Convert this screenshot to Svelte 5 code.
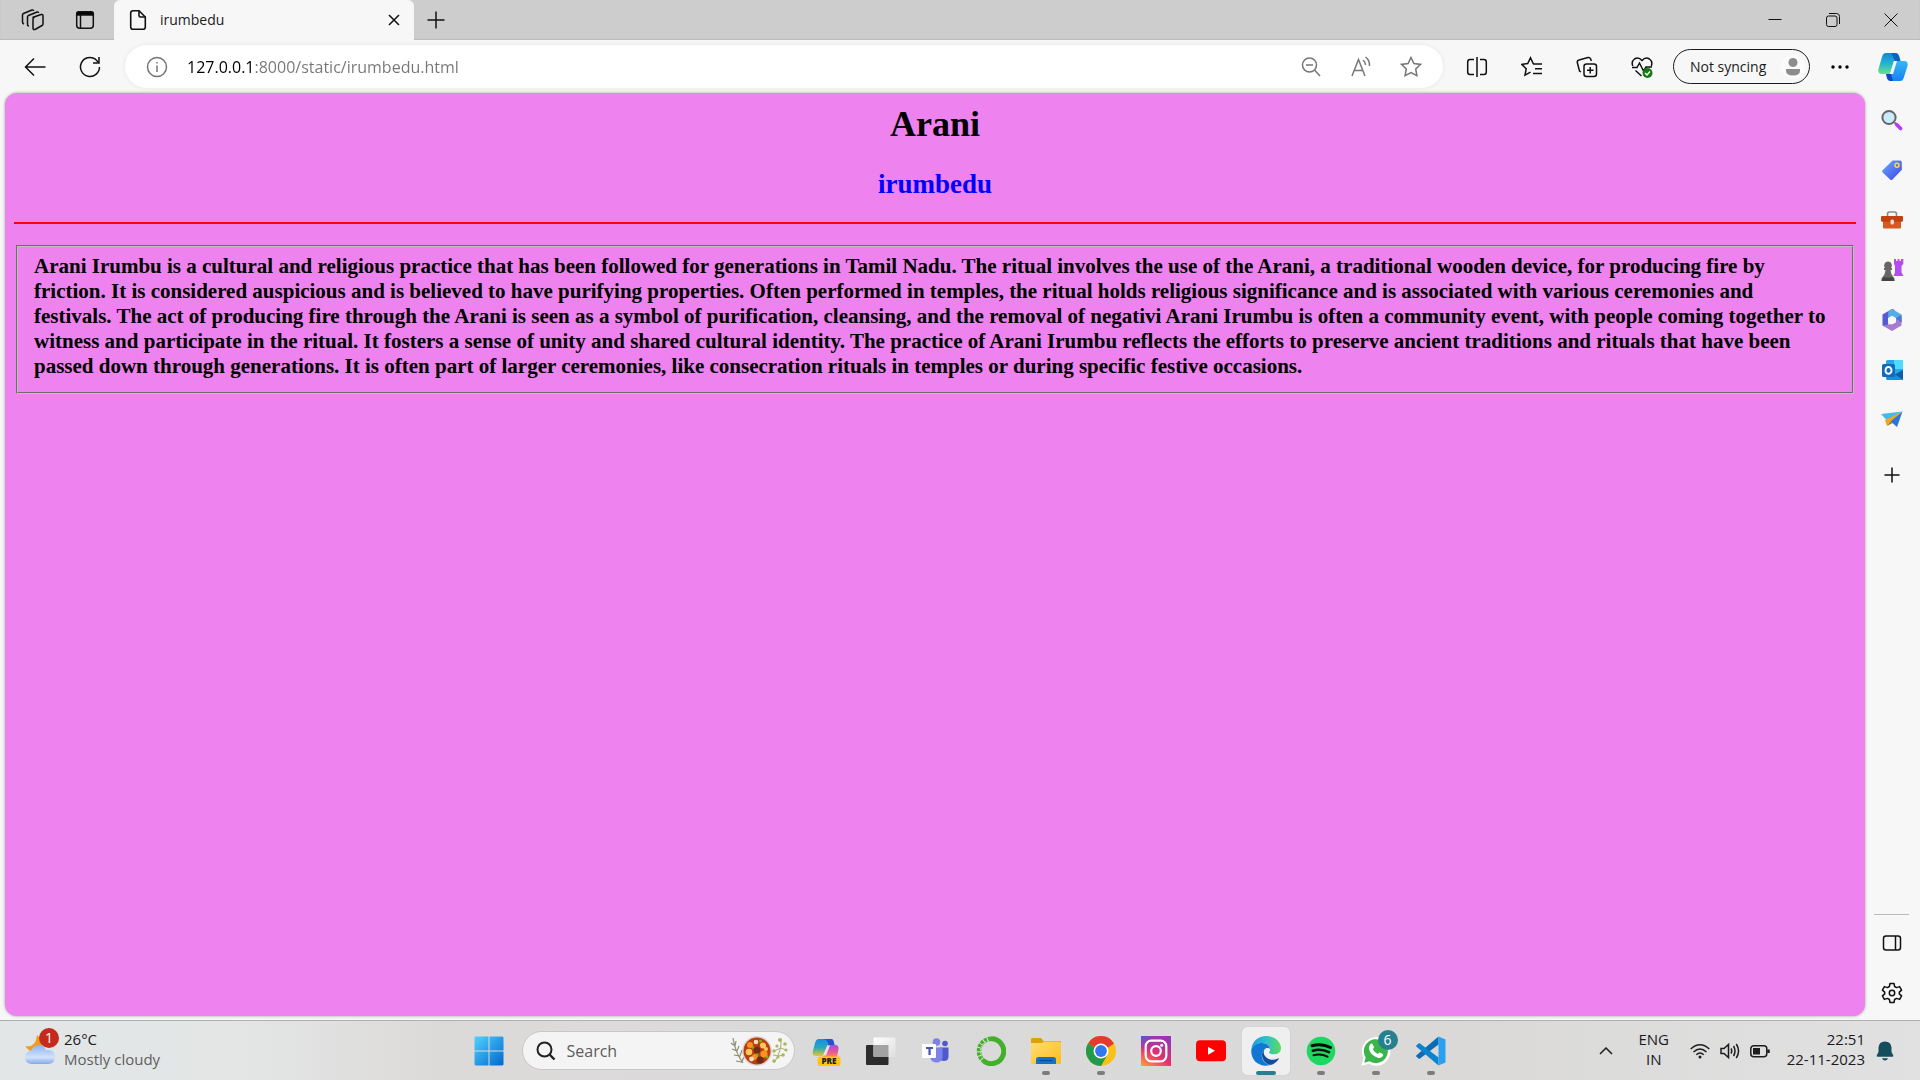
<script>
  const pinned = [
    { id: 'copilot', label: 'Copilot preview', state: '' },
    { id: 'taskview', label: 'Task view', state: '' },
    { id: 'teams', label: 'Microsoft Teams', state: '' },
    { id: 'anaconda', label: 'Anaconda Navigator', state: '' },
    { id: 'folder', label: 'File Explorer', state: 'open' },
    { id: 'chrome', label: 'Google Chrome', state: 'open' },
    { id: 'instagram', label: 'Instagram', state: '' },
    { id: 'youtube', label: 'YouTube', state: '' },
    { id: 'edge', label: 'Microsoft Edge', state: 'active' },
    { id: 'spotify', label: 'Spotify', state: 'open' },
    { id: 'whatsapp', label: 'WhatsApp', state: 'open', badge: '6' },
    { id: 'vscode', label: 'Visual Studio Code', state: 'open' }
  ];
  const tools = ['search', 'shopping', 'toolbox', 'games', 'office', 'outlook', 'drop'];
  let url = $state('127.0.0.1:8000/static/irumbedu.html');
  let query = $state('');
</script>

{#snippet toolIcon(id)}
  <svg width="24" height="24" viewBox="0 0 24 24" aria-hidden="true">
    {#if id === 'search'}
      <path d="M14.5 14.5l3 3" stroke="#777" stroke-width="2" />
      <path d="M16.6 16.600l4 4" stroke="#b93bf5" stroke-width="3.600" stroke-linecap="round" />
      <circle cx="9" cy="9.500" r="6.600" fill="#c9ebfb" stroke="#666" stroke-width="2" />
    {:else if id === 'shopping'}
      <path d="M12.500 2.500h7.500q1.800 0 1.800 1.800v7.500L12.500 21.600q-1.200 1-2.400 0L2.700 14.500q-1-1.200 0-2.300z" fill="url(#gTag)" />
      <circle cx="17" cy="7.300" r="2" fill="#5a6de8" stroke="#ffdc3c" stroke-width="1.500" />
    {:else if id === 'toolbox'}
      <path d="M7.500 8V6q0-2 2-2h5q2 0 2 2v2" fill="none" stroke="#8a8a8a" stroke-width="1.600" />
      <path d="M3 13h18v6.500q0 1-1 1H4q-1 0-1-1z" fill="#d9581f" />
      <path d="M2 8h20q1 0 1 1v3.200q0 1.500-1.500 1.500h-19Q1 13.700 1 12.200V9q0-1 1-1z" fill="#c2410e" />
      <rect x="10.500" y="11.500" width="3.500" height="5" rx="1.500" fill="#e4e0dd" />
    {:else if id === 'games'}
      <path d="M14 1h2v2h1.500V1h2v2H21V1h2.300v5L21.500 8v6.500l2 3.500H13.500l1.500-3.500V8L14 6z" fill="#b54bf5" />
      <path d="M8 3.500a4 4 0 013 6.500h1v2h-1.500q.3 4 2.500 6.500l1.500 2v2.500H1.500V20.500L3 18.500q2.200-2.500 2.500-6.500H4v-2h1a4 4 0 013-6.500z" fill="#666" />
      <path d="M3 19.500h10l1.500 3.500h-13z" fill="#444" />
    {:else if id === 'office'}
      <path d="M12 1L2.500 6.500v11L8.200 20V10.200L14.500 6V1.800z" fill="#555bd0" />
      <path d="M12 1l9.500 5.500v8l-5.700-4.300L12 8 8.200 10.200V3.200z" fill="#57ace8" />
      <path d="M2.500 17.500L12 23l9.500-5.500V8.500l-5.700 1.700v4L12 16z" fill="#a77ad0" />
      <path d="M15.800 10.200L21.500 7v7.500z" fill="#4379d8" />
      <path d="M12 7.700l4 2.300v4.200L12 16.500l-4-2.300V10z" fill="#f7f7f7" />
    {:else if id === 'outlook'}
      <rect x="6" y="2" width="17" height="20" rx="1.500" fill="#28a8ea" />
      <path d="M14 2h9v9h-9z" fill="#50d9ff" /><path d="M7 12l8 4 8-4v9q0 1-1 1H7z" fill="#1490df" />
      <path d="M23 12l-8 4.500 8 5z" fill="#0a5ea8" />
      <rect x="2" y="6" width="13" height="13" rx="1.500" fill="#0f6cbd" />
      <ellipse cx="8.500" cy="12.400" rx="3" ry="3.400" fill="none" stroke="#fff" stroke-width="1.900" />
    {:else}
      <path d="M1 6l21.500-2.500L7 12.500z" fill="#43b9f0" />
      <path d="M22.500 3.500L10 13l7 6z" fill="#2877db" />
      <path d="M22.500 3.500L5 12l2 6 3.500-4.500z" fill="#f2a51d" />
      <path d="M7 18l3.500-4.500L12.500 15z" fill="#b56d09" />
    {/if}
  </svg>
{/snippet}

{#snippet appIcon(id)}
  <svg width="30" height="30" viewBox="0 0 30 30" aria-hidden="true">
    {#if id === 'copilot'}
      <path d="M8 3h12q2 0 2.500 2l1 4h-7l-4.500 11H5q-4 0-3.300-4L4 7q1-4 4-4z" fill="url(#gCop1)" />
      <path d="M12 3h8q2 0 2.500 2l1 4h-6q-1-6-5.500-6z" fill="#2352cf" />
      <path d="M17 9h7q4 0 3.500 4l-1.500 8H10q3 0 4-4z" fill="url(#gCop2)" />
      <path d="M16.500 9.500h2.500l-4 10h-3z" fill="#ecdff5" />
      <rect x="6.500" y="20.500" width="23" height="9.500" rx="2" fill="#ffc60b" />
      <text x="18" y="28.200" text-anchor="middle" class="pre">PRE</text>
    {:else if id === 'taskview'}
      <rect x="0" y="9" width="22.500" height="20" rx="1" fill="#2c2c2c" />
      <rect x="7.500" y="1.500" width="22" height="19.500" rx="1" fill="url(#gTask)" />
      <path d="M7.500 9h15v12h-14q-1 0-1-1z" fill="#a3a3a3" />
    {:else if id === 'teams'}
      <circle cx="15.500" cy="6" r="3.800" fill="#7b83eb" /><circle cx="24" cy="7.500" r="2.800" fill="#5059c9" />
      <path d="M19 11.500h8.500v9q0 4.500-5 4.500-3.500 0-3.500-4z" fill="#5059c9" />
      <path d="M9 11.500h12.500v10q-1 5-6 5t-6.500-5z" fill="#7b83eb" />
      <rect x="1" y="8" width="14" height="14" rx="1" fill="#fff" />
      <path d="M5 11h7v2H9.700v6H7.400v-6H5z" fill="#4b53bc" />
    {:else if id === 'anaconda'}
      <path d="M15 2.800A12.400 12.400 0 1 1 8 25.200" fill="none" stroke="#43b02a" stroke-width="5" />
      <path d="M8.500 25.500A12.400 12.400 0 0 1 15 2.800" fill="none" stroke="#43b02a" stroke-width="4.500" stroke-dasharray="3 1" />
      <path d="M6.500 23A12.500 12.500 0 0 1 14 3.800" fill="none" stroke="#dfe8dc" stroke-width="1" stroke-dasharray="1.500 1.500" />
    {:else if id === 'folder'}
      <path d="M0 3.500Q0 2 1.500 2H10l2.500 3H30v7H0z" fill="#dfa006" />
      <path d="M0 7h11l2-1.500H28.500q1.500 0 1.500 1.500v20q0 1-1 1H1q-1 0-1-1z" fill="url(#gFold)" />
      <path d="M5 28v-4.500Q5 21 7.500 21h15q2.500 0 2.500 2.500V28z" fill="#1273c9" />
      <path d="M8.500 24.500h13" stroke="#0a4c8c" stroke-width="1.200" />
    {:else if id === 'chrome'}
      <circle cx="15" cy="15" r="15" fill="#fbc116" />
      <path d="M15 15L2 7.500A15 15 0 0 1 28 7.500z" fill="#e33b2e" /><path d="M15 7.500h13l-6 4z" fill="#e33b2e" />
      <path d="M2 7.500A15 15 0 0 0 15 30l6.500-11.300L15 15z" fill="#229a4a" />
      <circle cx="15" cy="15" r="7.500" fill="#fff" /><circle cx="15" cy="15" r="5.900" fill="#3078ef" />
    {:else if id === 'instagram'}
      <rect width="30" height="30" fill="url(#gInsta)" /><rect width="30" height="30" fill="url(#gInstaGlow)" />
      <g fill="none" stroke="#fff" stroke-width="2.200"><rect x="4.700" y="4.700" width="20.600" height="20.600" rx="5.500" /><circle cx="15" cy="15" r="4.800" /></g>
      <circle cx="20.700" cy="9.300" r="1.500" fill="#fff" />
    {:else if id === 'youtube'}
      <rect x="0" y="4.300" width="30" height="21" rx="4" fill="#f00" /><path d="M12 10.800v8l7-4z" fill="#fff" />
    {:else if id === 'edge'}
      <path d="M.3 14C1 5.500 7 0 15.300 0 23.500 0 30 5.500 30 12c0 4-3 6.500-7 6.500-3 0-5-1-5-2s1-1.500 1-3.500c0-3-3.500-6-8-6-5.500 0-9.500 3-10.700 7z" fill="url(#gEdge1)" />
      <path d="M.3 14C1.500 9.500 6 7 11 7c4.500 0 8 3 8 6-2-2-6-1-7.500 3-2.500 6 2 12.500 8 13C9 32-.5 25 .3 14z" fill="#1177d4" />
      <path d="M11.500 16c-2 5 2 12.500 8 13 3.500-.8 6.300-3 8.200-6 .3-.6-.3-.9-.8-.6-2 1-4 1.500-6 1.300-4.500-.3-8-3.500-8.200-7.200q-.2-2.500 2-4-2.300.7-3.200 3.500z" fill="#104e9e" />
      <path d="M14 13.500q2-2 5-.5c0 2-1 2.500-1 3.500s2 2 5 2q3 0 5-1.500-1.500 3.500-6 4-5.500.5-7.500-3-1-2-.5-4.500z" fill="#eef3f6" />
    {:else if id === 'spotify'}
      <circle cx="15" cy="15" r="14.300" fill="#1ed760" />
      <g fill="none" stroke="#0a0a0a" stroke-linecap="round"><path d="M6 9.700Q16 7 24.500 11.500" stroke-width="3" /><path d="M6.800 14.700Q15 12.300 23 16.200" stroke-width="2.500" /><path d="M7.500 19.200Q15 17.300 21.500 20.700" stroke-width="2" /></g>
    {:else if id === 'whatsapp'}
      <path d="M.3 29.700l2.200-7.600A14.300 14.300 0 1 1 8 27.800z" fill="#fff" />
      <path d="M3.200 26.800l1.500-5.300A12 12 0 1 1 8.500 25.300z" fill="#3bb54a" />
      <path d="M9.500 8q1.200-1 2 0l1.500 3q0 1-1.200 2.200 1.700 3.300 5 4.800 1.300-1.800 2-1.600l3 1.500q.8.800 0 2.200-1.800 2.500-5 1.600Q9.500 19.500 8 13q-.3-3.200 1.500-5z" fill="#fff" />
    {:else}
      <path d="M22.500.5v8L4 22.500q-.8.500-1.500 0L.5 20.700q-.7-.8 0-1.500z" fill="#0a6cb4" />
      <path d="M22.500 29.500v-8L4 7.500q-.8-.5-1.500 0L.5 9.300q-.7.800 0 1.500z" fill="#0b83cd" />
      <path d="M22.500.5L29.500 3.500v23l-7 3z" fill="#2aa1f0" />
    {/if}
  </svg>
{/snippet}

<svg class="defs" width="0" height="0" aria-hidden="true">
  <defs>
    <linearGradient id="gTag" x1="0" y1="0" x2="1" y2="1"><stop stop-color="#65aefa" /><stop offset="1" stop-color="#4240e8" /></linearGradient>
    <linearGradient id="gCop1" x1="0" y1="0" x2="0" y2="1"><stop stop-color="#168de4" /><stop offset=".5" stop-color="#25a9bd" /><stop offset="1" stop-color="#e9c52c" /></linearGradient>
    <linearGradient id="gCop2" x1="0" y1="0" x2="0" y2="1"><stop stop-color="#a74be2" /><stop offset=".6" stop-color="#ed5794" /><stop offset="1" stop-color="#ff8c59" /></linearGradient>
    <linearGradient id="gTask" x1="0" y1="0" x2="1" y2="1"><stop stop-color="#fff" /><stop offset="1" stop-color="#dedede" /></linearGradient>
    <linearGradient id="gFold" x1="0" y1="0" x2="1" y2="1"><stop stop-color="#ffde73" /><stop offset="1" stop-color="#fbbc1b" /></linearGradient>
    <linearGradient id="gInsta" x1="0" y1="1" x2=".6" y2="0"><stop stop-color="#fda03c" /><stop offset=".5" stop-color="#e42f6c" /><stop offset="1" stop-color="#9a35b5" /></linearGradient>
    <radialGradient id="gInstaGlow" cx="0" cy="0" r=".6"><stop stop-color="#4a5ed6" /><stop offset="1" stop-color="#8a3ac0" stop-opacity="0" /></radialGradient>
    <linearGradient id="gEdge1"><stop stop-color="#1a9be0" /><stop offset=".5" stop-color="#2cbfd0" /><stop offset="1" stop-color="#5fdc55" /></linearGradient>
    <linearGradient id="gWin" x1="0" y1="0" x2="1" y2="1"><stop stop-color="#50d2fb" /><stop offset="1" stop-color="#0067cf" /></linearGradient>
    <linearGradient id="gSky1" x1="0" y1="0" x2="0" y2="1"><stop stop-color="#1486d8" /><stop offset=".5" stop-color="#22b5cf" /><stop offset="1" stop-color="#6ce08d" /></linearGradient>
    <linearGradient id="gSky2" x1="0" y1="0" x2="0" y2="1"><stop stop-color="#35b8f4" /><stop offset="1" stop-color="#1681f5" /></linearGradient>
    <linearGradient id="gCloud" x1="0" y1="0" x2="0" y2="1"><stop stop-color="#8db3f1" /><stop offset=".65" stop-color="#d2e2fb" /><stop offset="1" stop-color="#81a8e9" /></linearGradient>
  </defs>
</svg>

<div class="window">
  <header class="tabs">
    <button class="lead first" aria-label="Workspaces">
      <svg class="line" width="24" height="24" viewBox="0 0 24 24"><path d="M11.500 9.500L20 6.500q2-.5 2 1.500v8q0 1-1 1.500l-6.500 3.700q-2.500 1-2.500-1v-9q0-1 1-1.700z" /><path d="M8 18q-1.500 0-1.500-1.500V9q0-1 1-1.500L16 4q1.500-.5 1.500 1" /><path d="M3 16q-1.500-.5-1.500-2V7q0-1 1-1.500L11 2q1.500-.5 1.500 1" /></svg>
    </button>
    <button class="lead" aria-label="Tab actions">
      <svg class="line" width="20" height="20" viewBox="0 0 20 20"><rect x="1.700" y="1.700" width="16.600" height="16.600" rx="3" /><path d="M1.700 5V4q0-2.300 2.300-2.300h12q2.300 0 2.300 2.300v1z" fill="#000" /><path d="M5.500 5v13" /></svg>
    </button>
    <div class="tab">
      <svg class="line page-icon" width="18" height="22" viewBox="0 0 18 22"><path d="M4 1.700h6L16.300 8v10q0 2.300-2.300 2.300H4q-2.300 0-2.300-2.300V4Q1.700 1.700 4 1.700z" /><path d="M10 1.700V6.500q0 1.500 1.500 1.500h4.800" /></svg>
      <span>irumbedu</span>
      <button class="close-tab" aria-label="Close tab"><svg class="line" width="12" height="12" viewBox="0 0 12 12"><path d="M1 1l10 10M11 1L1 11" /></svg></button>
    </div>
    <button class="new-tab" aria-label="New tab"><svg class="line" width="18" height="18" viewBox="0 0 18 18"><path d="M9 .5v17M.5 9h17" /></svg></button>
    <div class="controls">
      <button aria-label="Minimize"><svg class="line thin" width="14" height="14" viewBox="0 0 14 14"><path d="M.5 6.500h13" /></svg></button>
      <button aria-label="Restore"><svg class="line thin" width="14" height="14" viewBox="0 0 14 14"><rect x=".5" y="3" width="10.500" height="10.500" rx="2" /><path d="M3 .5h7.500q3 0 3 3V11" /></svg></button>
      <button aria-label="Close"><svg class="line thin" width="14" height="14" viewBox="0 0 14 14"><path d="M.5.500l13 13M13.500.500l-13 13" /></svg></button>
    </div>
  </header>

  <nav class="toolbar">
    <button class="nav-btn" aria-label="Back"><svg class="line" width="22" height="20" viewBox="0 0 22 20"><path d="M21.500 10H1.500M10 1.500L1.500 10l8.500 8.500" /></svg></button>
    <button class="nav-btn" aria-label="Refresh"><svg class="line" width="22" height="22" viewBox="0 0 22 22"><path d="M20.500 11A9.500 9.500 0 1 1 16.500 3.200L19.500 6.500" /><path d="M20 1v6h-6" /></svg></button>
    <div class="address">
      <button class="info" aria-label="Site information"><svg class="line" width="22" height="22" viewBox="0 0 22 22"><circle cx="11" cy="11" r="9.500" /><path d="M11 9.500V16M11 6v1.500" /></svg></button>
      <input aria-label="Address" bind:value={url} />
      <button aria-label="Zoom out"><svg class="line" width="22" height="22" viewBox="0 0 22 22"><circle cx="9.500" cy="9" r="7" /><path d="M14.500 14l5.500 6M6 9h7" /></svg></button>
      <button aria-label="Read aloud"><svg class="line" width="22" height="22" viewBox="0 0 22 22"><path d="M2 20L8.500 3.500 15 20M4.200 14.500h8.600M13 4q2.500 2 2.500 5M15.500 1q4.500 3.500 4 9" /></svg></button>
      <button aria-label="Add to favorites"><svg class="line" width="22" height="22" viewBox="0 0 22 22"><path d="M11 1.500l2.900 6 6.600.9-4.800 4.600 1.200 6.600L11 16.500l-5.900 3.100L6.300 13 1.500 8.400l6.600-.9z" /></svg></button>
    </div>
    <button class="tool" aria-label="Split screen"><svg class="line" width="22" height="22" viewBox="0 0 22 22"><path d="M8 3.500H4Q1.700 3.500 1.700 6v10Q1.700 18.500 4 18.500h4M14 3.500h4q2.300 0 2.300 2.500v10q0 2.500-2.300 2.500h-4M11 1v20" /></svg></button>
    <button class="tool" aria-label="Favorites"><svg class="line" width="22" height="22" viewBox="0 0 22 22"><path d="M13 8l-.8-.5L9.500 1.800 6.700 7.500l-6 .9 4.500 4.300-1.200 6.500 5.500-3M12 8h9M14 12.700h7M12 17.500h9" /></svg></button>
    <button class="tool" aria-label="Collections"><svg class="line" width="22" height="22" viewBox="0 0 22 22"><rect x="8" y="8" width="12.500" height="12.500" rx="2.500" /><path d="M14.200 11v6.500M11 14.200h6.500M5 16l-1.500-1L1.300 6.500Q1 4.500 3 4l9-2.500q2-.3 2.700 1.500l.6 2" /></svg></button>
    <button class="tool" aria-label="Browser essentials"><svg class="line" width="22" height="22" viewBox="0 0 22 22"><path d="M1.800 10Q0 5.500 3.500 3q4-2.500 7.500 1.500Q14.500.5 18.500 3q3.500 2.500 1.800 7M1 11.500h5L8.500 7l4 8 2.500-4h6M4.500 14.500l6 5.500" /><circle cx="16.500" cy="17" r="5" fill="#107c10" stroke="none" /><path d="M14 17l2 2 3-3.500" stroke="#fff" /></svg></button>
    <button class="profile">Not syncing
      <svg width="24" height="24" viewBox="0 0 24 24"><circle cx="12" cy="12" r="12" fill="#fbfbfb" /><circle cx="12" cy="7.500" r="4.500" fill="#8c8c8c" /><path d="M5 14h14v1.500q0 5-7 5t-7-5z" fill="#8c8c8c" /></svg>
    </button>
    <button class="more" aria-label="Settings and more"><svg width="18" height="4" viewBox="0 0 18 4"><circle cx="2" cy="2" r="1.700" /><circle cx="9" cy="2" r="1.700" /><circle cx="16" cy="2" r="1.700" /></svg></button>
    <button class="assistant" aria-label="Copilot">
      <svg width="30" height="28" viewBox="0 0 30 28"><path d="M8 0h9q3 0 4 3l1.500 5h-6.500l-4 13H4Q-.5 21 .5 16L4 4q1-4 4-4z" fill="url(#gSky1)" /><path d="M13 0h4q3 0 4 3l1.500 5H17z" fill="#0b62c4" /><path d="M22 28h-9q-3 0-4-3l-.5-4 4 0L17 8h9q4.500 0 3.500 5L26 24q-1 4-4 4z" fill="url(#gSky2)" /><path d="M8 21h5l2 7h-2q-3 0-4-3z" fill="#1444ce" /><path d="M16 8h3l-4 13h-3z" fill="#f7f7f7" /></svg>
    </button>
  </nav>

  <div class="body">
    <main>
      <h1>Arani</h1>
      <h2>irumbedu</h2>
      <hr />
      <fieldset>
        <h3>Arani Irumbu is a cultural and religious practice that has been followed for generations in Tamil Nadu. The ritual involves the use of the Arani, a traditional wooden device, for producing fire by friction. It is considered auspicious and is believed to have purifying properties. Often performed in temples, the ritual holds religious significance and is associated with various ceremonies and festivals. The act of producing fire through the Arani is seen as a symbol of purification, cleansing, and the removal of negativi Arani Irumbu is often a community event, with people coming together to witness and participate in the ritual. It fosters a sense of unity and shared cultural identity. The practice of Arani Irumbu reflects the efforts to preserve ancient traditions and rituals that have been passed down through generations. It is often part of larger ceremonies, like consecration rituals in temples or during specific festive occasions.</h3>
      </fieldset>
    </main>
    <aside>
      {#each tools as id}
        <button aria-label={id}>{@render toolIcon(id)}</button>
      {/each}
      <button class="customize" aria-label="Customize"><svg class="line" width="16" height="16" viewBox="0 0 16 16"><path d="M8 .5v15M.5 8h15" /></svg></button>
      <div class="rule"></div>
      <button aria-label="Hide sidebar"><svg class="line" width="20" height="18" viewBox="0 0 20 18"><rect x="1.500" y="2" width="17" height="14" rx="2.500" /><path d="M13.500 2v14" /></svg></button>
      <button aria-label="Settings"><svg class="line" width="22" height="22" viewBox="0 0 22 22"><path d="M9 1.500h4l.6 3 2 1.100 3-1 2 3.500-2.300 2v1.800l2.300 2-2 3.500-3-1-2 1.100-.6 3H9l-.6-3-2-1.100-3 1-2-3.500 2.300-2v-1.800l-2.300-2 2-3.500 3 1 2-1.100z" stroke-linejoin="round" /><circle cx="11" cy="11" r="2.700" /></svg></button>
    </aside>
  </div>

  <footer>
    <button class="weather">
      <span class="weather-icon">
        <svg width="30" height="30" viewBox="0 0 30 30" aria-hidden="true"><path d="M12 1q7 5 4.500 12-4 6-12 3.500Q1 14 .5 12 11 14 12 1z" fill="#f39b1d" /><path d="M7 30q-7 0-7-6.500 0-6 6-6.500Q8 11 14 11q5 0 7 5 9-1 9 7 0 7-7 7z" fill="url(#gCloud)" /></svg>
        <span class="badge red">1</span>
      </span>
      <span class="weather-text"><span>26°C</span><span class="muted">Mostly cloudy</span></span>
    </button>
    <div class="center">
      <button class="app" aria-label="Start"><svg width="30" height="30" viewBox="0 0 30 30"><path d="M1.500.500h13v14h-14v-13zM15.500.500h13l1 1v13h-14zM.500 15.500h14v14h-13l-1-1zM15.500 15.500h14v13l-1 1h-13z" fill="url(#gWin)" /></svg></button>
      <label class="search">
        <svg width="20" height="20" viewBox="0 0 20 20" aria-hidden="true"><circle cx="8.500" cy="8.500" r="7" fill="none" stroke="#222" stroke-width="2" /><path d="M13.500 13.500l5 5" stroke="#222" stroke-width="2.400" /></svg>
        <input aria-label="Search" placeholder="Search" bind:value={query} />
        <svg width="58" height="32" viewBox="0 0 58 32" aria-hidden="true">
          <g fill="none" stroke="#8b8f78" stroke-width="1.200"><path d="M3 3q2 14 10 25M1 8l4 3 1-5M2 14l5 2 2-5M4 20l6 1 2-6M6 26l6 1 2-6" /></g>
          <g fill="none" stroke="#a5b06a" stroke-width="1"><path d="M51 4q1 12-7 24M44 16l7-3 5 2M43 20l6 1 4-1" /></g>
          <g fill="#a9b85f"><circle cx="50" cy="5" r="2" /><circle cx="47" cy="11" r="1.600" /><circle cx="55" cy="9" r="1.800" /><circle cx="44" cy="16" r="1.700" /><circle cx="56" cy="15" r="1.600" /><circle cx="53" cy="20" r="1.800" /><circle cx="44" cy="26" r="1.800" /><circle cx="48" cy="22" r="1.500" /></g>
          <circle cx="27" cy="16" r="15" fill="#d9d5d4" /><circle cx="27" cy="16" r="13.500" fill="#b83e0c" />
          <g fill="#ff9120"><circle cx="20" cy="10" r="3" /><circle cx="34" cy="19" r="3.600" /><circle cx="25" cy="22" r="3" /></g>
          <g fill="#ffc65a"><circle cx="33" cy="10.500" r="3" /><circle cx="19" cy="17" r="3.300" /><circle cx="36" cy="14" r="2" /></g>
          <g fill="#6c2c17"><circle cx="27" cy="15" r="3.300" /><circle cx="30" cy="25" r="3.600" /></g>
          <g fill="#f0dcc8"><circle cx="26" cy="7" r="2.300" /><circle cx="21.500" cy="24" r="2.400" /></g>
          <g fill="#79b520"><circle cx="30.500" cy="6" r="1.500" /><circle cx="27" cy="20" r="1.500" /><circle cx="37" cy="22" r="1.400" /><circle cx="23" cy="12.500" r="1.200" /></g>
        </svg>
      </label>
      {#each pinned as app}
        <button class="app {app.state}" aria-label={app.label}>
          {@render appIcon(app.id)}
          {#if app.badge}<span class="badge teal">{app.badge}</span>{/if}
        </button>
      {/each}
    </div>
    <div class="tray">
      <button class="chevron" aria-label="Show hidden icons"><svg class="line tray-icon" width="14" height="8" viewBox="0 0 14 8"><path d="M1 7l6-6 6 6" /></svg></button>
      <button class="lang"><span>ENG</span><span>IN</span></button>
      <button class="status" aria-label="Network, volume and battery">
        <svg class="line tray-icon" width="20" height="20" viewBox="0 0 20 20"><path d="M.7 8q9.300-8.500 18.600 0M3.500 11Q10 5 16.500 11M6.300 13.800q3.700-3.500 7.400 0" /><circle cx="10" cy="16" r="1.500" fill="#1d1d1d" stroke="none" /></svg>
        <svg class="line tray-icon" width="20" height="20" viewBox="0 0 20 20"><path d="M1 7.500h3L8.500 3.500v13L4 12.500H1zM11 7.500q1.500 2.500 0 5M13.500 5q3 5 0 10M16.300 3q4.500 7 0 14" /></svg>
        <svg class="line tray-icon" width="20" height="20" viewBox="0 0 20 20"><rect x=".8" y="4.700" width="16" height="11" rx="3" /><rect x="3" y="7" width="7" height="6.500" fill="#1d1d1d" stroke="none" /><path d="M18.500 8.500v3.500" stroke-width="2.500" /></svg>
      </button>
      <button class="clock"><span>22:51</span><span>22-11-2023</span></button>
      <button class="bell" aria-label="Notifications"><svg width="18" height="20" viewBox="0 0 18 20"><path d="M9 .5q6 0 6.500 6V11l1.800 3.500q.2 1.200-1 1.200H1.700q-1.200 0-1-1.200L2.500 11V6.500Q3 .5 9 .5zM6 17.200h6q-.7 2.300-3 2.300t-3-2.300z" fill="#164d5c" /></svg></button>
    </div>
  </footer>
</div>

<style>
  :global(body) { margin: 0; }
  .defs { position: absolute; }
  .window {
    display: flex; flex-direction: column; min-height: 100vh;
    background: #f7f7f7; color: #1b1b1b;
    font-family: "Open Sans", "Noto Sans", sans-serif; font-size: 15px; line-height: 20px;
  }
  button { display: flex; align-items: center; justify-content: center; flex: none; padding: 0; border: 0; background: none; color: inherit; font: inherit; }
  input { min-width: 0; padding: 0; border: 0; outline: 0; background: none; font: inherit; }
  svg { display: block; flex: none; }
  .line { fill: none; stroke: #111; stroke-width: 1.5; }
  .thin { stroke-width: 1; }

  .tabs { display: flex; align-items: center; height: 40px; background: #cdcdcd; box-shadow: inset 0 -1px 1px #bbb; }
  .lead { width: 52px; height: 40px; }
  .lead.first { margin-left: 7px; }
  .tab { display: flex; align-items: center; width: 300px; height: 40px; margin-left: 3px; border-radius: 6px 6px 0 0; background: #f7f7f7; box-sizing: border-box; padding: 0 14px 0 15px; font-size: 14px; }
  .tab span { flex: 1; margin-left: 13px; }
  .page-icon { stroke-width: 1.6; }
  .new-tab { width: 44px; height: 40px; }
  .close-tab { width: 12px; height: 40px; }
  .controls { display: flex; margin-left: auto; }
  .controls button { width: 58px; height: 40px; }

  .toolbar { display: flex; align-items: center; height: 53px; }
  .nav-btn { width: 55px; height: 40px; }
  .nav-btn:first-child { margin-left: 7px; }
  .address { display: flex; align-items: center; flex: 1; height: 43px; margin: 0 6px 0 8px; padding: 0 7px 0 4px; border-radius: 22px; background: #fff; box-shadow: 0 0 4px #e4e4e4; }
  .address .line { stroke: #767676; }
  .address button { width: 50px; height: 40px; }
  .address .info { width: 56px; }
  .address input { flex: 1; margin-left: 2px; height: 30px; font-size: 16px; color: transparent; caret-color: #000; background: linear-gradient(90deg, #000 68px, #767676 68px); background-clip: text; }
  .tool { width: 55px; height: 40px; }
  .profile { justify-content: space-between; width: 137px; height: 35px; margin-left: 4px; padding: 0 4px 0 16px; border: 1px solid #1b1b1b; border-radius: 18px; box-sizing: border-box; font-size: 14px; }
  .more { width: 60px; height: 40px; }
  .assistant { width: 50px; height: 40px; padding-right: 4px; }

  .body { display: flex; flex: 1; padding-left: 5px; }
  main { flex: 1; min-width: 0; margin-bottom: 4px; padding: 10px 9px; border-radius: 12px; background: #ee82ee; box-shadow: 0 0 3px #999; color: #000; font-family: "Liberation Serif", "Times New Roman", serif; }
  h1, h2, h3 { margin: 0; font-weight: bold; }
  h1 { font-size: 36px; line-height: 42px; text-align: center; }
  h2 { margin-top: 23px; font-size: 27px; line-height: 32px; text-align: center; color: #00f; }
  hr { height: 2px; margin: 22px 0 21px; border: 0; background: #f00; }
  fieldset { margin: 0 2px; padding: 7px 16px 13px; border: 2px groove #c0c0c0; }
  h3 { font-size: 21px; line-height: 25px; }
  aside { display: flex; flex-direction: column; align-items: center; width: 55px; padding: 2px 2px 2px 0; box-sizing: border-box; }
  aside button { width: 50px; height: 50px; }
  aside .customize { margin-top: 5px; }
  .rule { width: 35px; height: 1px; margin: auto 0 3px; background: #bbb; }

  footer { display: grid; grid-template-columns: 1fr auto 1fr; align-items: center; height: 60px; box-sizing: border-box; border-top: 1px solid #b0b0b3; background: linear-gradient(90deg, #e2e6e6 0%, #e4e6e6 12%, #dcdad9 23%, #dbdadb 45%, #dad9d8 75%, #e1e1e1 100%); }
  .weather { justify-self: start; margin-left: 25px; padding-bottom: 4px; gap: 9px; text-align: left; }
  .weather-icon { position: relative; }
  .weather-text { display: flex; flex-direction: column; }
  .muted { color: #5d5f5f; }
  .badge { position: absolute; width: 20px; height: 20px; border-radius: 50%; color: #fff; font-size: 14px; line-height: 20px; text-align: center; }
  .red { top: -6px; left: 14px; background: #c42b1c; }
  .teal { top: 3px; right: 6px; background: #26808f; }
  .center { display: flex; align-items: center; }
  .app { position: relative; width: 55px; height: 48px; }
  .open::after, .active::after { content: ""; position: absolute; bottom: 0; width: 8px; height: 4px; border-radius: 2px; background: #7d7c7c; }
  .active { width: 48px; margin: 0 4px 0 3px; border-radius: 5px; background: #f0efef; box-shadow: 0 0 1px #aaa; }
  .active::after { width: 20px; background: #26808f; }
  .search { display: flex; align-items: center; width: 273px; height: 39px; box-sizing: border-box; margin: 0 4px 0 5px; padding: 0 6px 0 13px; border: 1px solid #c8c7c7; border-radius: 20px; background: #f5f4f4; }
  .search input { flex: 1; margin-left: 11px; font-size: 16px; color: #222; }
  .search input::placeholder { color: #5c5c5c; opacity: 1; }
  .pre { font: 800 8px "Open Sans", sans-serif; fill: #222; }
  .tray { display: flex; align-items: center; justify-self: end; }
  .tray-icon { stroke: #1d1d1d; }
  .chevron { width: 40px; height: 40px; }
  .lang { flex-direction: column; width: 56px; padding-bottom: 3px; }
  .status { gap: 10px; padding: 0 8px; }
  .clock { flex-direction: column; align-items: flex-end; margin-left: 9px; padding-bottom: 3px; }
  .bell { width: 40px; height: 40px; margin-right: 15px; }
</style>
